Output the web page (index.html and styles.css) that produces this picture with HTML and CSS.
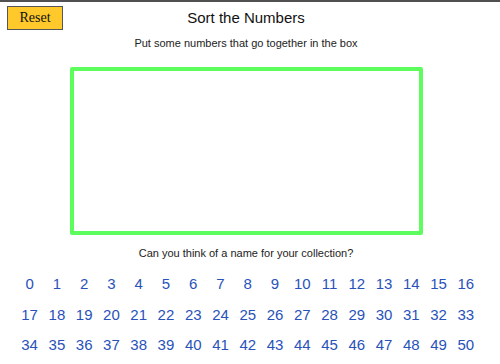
FILE: index.html
```html
<!DOCTYPE html>
<html>
<head>
<meta charset="utf-8">
<link rel="stylesheet" href="styles.css">
</head>
<body>
<div class="page">
  <div class="header">
    <button class="reset">Reset</button>
    <h1 class="title">Sort the Numbers</h1>
    <div></div>
  </div>
  <p class="prompt sub">Put some numbers that go together in the box</p>
  <div class="box"></div>
  <p class="prompt name">Can you think of a name for your collection?</p>
  <div class="numbers">
    <span>0</span><span>1</span><span>2</span><span>3</span><span>4</span><span>5</span><span>6</span><span>7</span><span>8</span><span>9</span><span>10</span><span>11</span><span>12</span><span>13</span><span>14</span><span>15</span><span>16</span>
    <span>17</span><span>18</span><span>19</span><span>20</span><span>21</span><span>22</span><span>23</span><span>24</span><span>25</span><span>26</span><span>27</span><span>28</span><span>29</span><span>30</span><span>31</span><span>32</span><span>33</span>
    <span>34</span><span>35</span><span>36</span><span>37</span><span>38</span><span>39</span><span>40</span><span>41</span><span>42</span><span>43</span><span>44</span><span>45</span><span>46</span><span>47</span><span>48</span><span>49</span><span>50</span>
  </div>
</div>
</body>
</html>
```
FILE: styles.css
```css
html, body {
  margin: 0;
  padding: 0;
  background: #fff;
}
body {
  border-top: 2px solid #505050;
  font-family: "Liberation Sans", Arial, sans-serif;
  color: #222;
}
.page {
  width: 492px;
}
.header {
  display: grid;
  grid-template-columns: 1fr auto 1fr;
  align-items: start;
}
.reset {
  justify-self: start;
  margin: 4px 0 0 7px;
  width: 56px;
  height: 24px;
  padding: 0;
  background: #ffc92c;
  border: 1px solid #555;
  border-radius: 0;
  font-family: "Liberation Serif", "Times New Roman", serif;
  font-size: 14px;
  color: #111;
}
.title {
  margin: 7px 0 0;
  font-size: 15px;
  line-height: 18px;
  font-weight: normal;
  color: #111;
}
.prompt {
  margin: 0;
  text-align: center;
  font-size: 11px;
  line-height: 14px;
  color: #222;
}
.sub {
  margin-top: 6px;
}
.box {
  box-sizing: border-box;
  width: 353px;
  height: 168px;
  margin: 17px 0 0 70px;
  border: 4px solid #5dfd5d;
  border-radius: 2px;
}
.name {
  margin-top: 11px;
}
.numbers {
  display: grid;
  grid-template-columns: repeat(17, 27.27px);
  grid-auto-rows: 30.5px;
  padding-left: 16px;
  margin-top: 9px;
  font-size: 15px;
  line-height: 30.5px;
  color: #2952b9;
}
.numbers span {
  text-align: center;
}
```
